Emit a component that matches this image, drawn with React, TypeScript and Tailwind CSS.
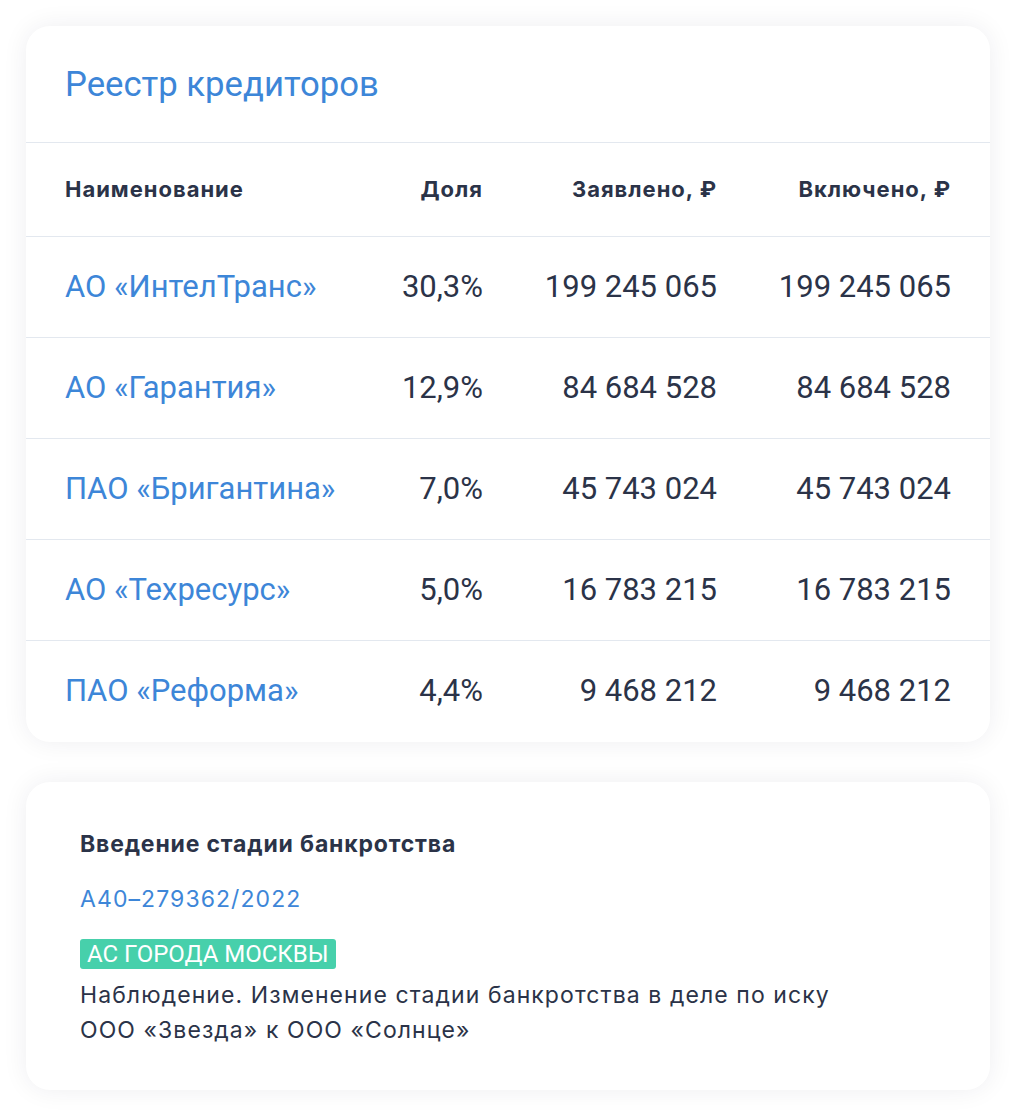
const rows = [
  { name: 'АО «ИнтелТранс»', share: '30,3%', claimed: '199 245 065', included: '199 245 065' },
  { name: 'АО «Гарантия»', share: '12,9%', claimed: '84 684 528', included: '84 684 528' },
  { name: 'ПАО «Бригантина»', share: '7,0%', claimed: '45 743 024', included: '45 743 024' },
  { name: 'АО «Техресурс»', share: '5,0%', claimed: '16 783 215', included: '16 783 215' },
  { name: 'ПАО «Реформа»', share: '4,4%', claimed: '9 468 212', included: '9 468 212' },
];

const cols = 'grid grid-cols-[1fr_110px_234px_234px] items-center px-[39px]';

export default function App() {
  return (
    <div className="min-h-screen bg-white px-[26px] pt-[26px] font-['Roboto',sans-serif] text-[#2b3348]">
      <div className="w-[964px] rounded-[24px] bg-white shadow-[0_0_26px_rgba(20,30,60,0.07)]">
        <h1 className="flex h-[116px] items-center px-[39px] text-[34.7px] text-[#3d86d8]">
          Реестр кредиторов
        </h1>
        <div className={`${cols} h-[95px] border-y border-[#e3e8ef] font-['Inter',sans-serif] text-[22px] font-bold tracking-[0.045em]`}>
          <div>Наименование</div>
          <div className="text-right">Доля</div>
          <div className="text-right">Заявлено, ₽</div>
          <div className="text-right">Включено, ₽</div>
        </div>
        {rows.map((r, i) => (
          <div
            key={r.name}
            className={`${cols} h-[101px] text-[31px] ${i < rows.length - 1 ? 'border-b border-[#e3e8ef]' : ''}`}
          >
            <div className="text-[#3d86d8]">{r.name}</div>
            <div className="text-right">{r.share}</div>
            <div className="text-right">{r.claimed}</div>
            <div className="text-right">{r.included}</div>
          </div>
        ))}
      </div>

      <div className="mt-[40px] w-[964px] rounded-[24px] bg-white px-[54px] pb-[42px] pt-[48px] font-['Inter',sans-serif] shadow-[0_0_26px_rgba(20,30,60,0.07)]">
        <div className="text-[23px] font-bold leading-[28px] tracking-[0.036em]">Введение стадии банкротства</div>
        <div className="mt-[27px] text-[23px] leading-[28px] tracking-[0.047em] text-[#3d86d8]">А40–279362/2022</div>
        <div className="mt-[26px] inline-block rounded-[3px] bg-[#47d0ab] px-[7px] font-['Roboto',sans-serif] text-[24px] leading-[30px] text-white">
          АС ГОРОДА МОСКВЫ
        </div>
        <p className="mt-[9px] text-[23px] leading-[35px] tracking-[0.047em]">
          Наблюдение. Изменение стадии банкротства в деле по иску
          <br />
          ООО «Звезда» к ООО «Солнце»
        </p>
      </div>
    </div>
  );
}
